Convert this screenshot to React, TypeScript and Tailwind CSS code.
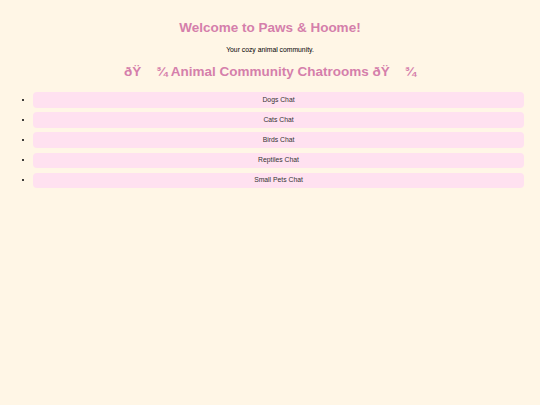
import React from 'react';

const rooms = ['Dogs Chat', 'Cats Chat', 'Birds Chat', 'Reptiles Chat', 'Small Pets Chat'];

const Paw = () => (
  <>
    ðŸ<span className="inline-block w-[15px]" />¾
  </>
);

export default function App() {
  return (
    <div className="min-h-[405px] w-full bg-[#fff6e6] px-4 pt-[19px] font-['Liberation_Sans',Arial,sans-serif] text-black">
      {/* Header */}
      <h1 className="text-center text-[13.5px] font-bold leading-[18px] text-[#d57fab]">Welcome to Paws &amp; Hoome!</h1>
      <p className="mt-[8px] text-center text-[6.8px] leading-[9px]">Your cozy animal community.</p>

      <h2 className="mt-[9px] text-center text-[13.5px] font-bold leading-[18px] text-[#d57fab]">
        <Paw /> Animal Community Chatrooms <Paw />
      </h2>

      {/* Rooms */}
      <ul className="mt-[11px] list-disc pl-[17px] text-[6.8px]">
        {rooms.map(room => (
          <li key={room} className="mb-[4.6px]">
            <button className="block h-[15.6px] w-full rounded-[4px] bg-[#ffe1f0] text-center text-[6.8px] text-[#333]">
              {room}
            </button>
          </li>
        ))}
      </ul>
    </div>
  );
}
